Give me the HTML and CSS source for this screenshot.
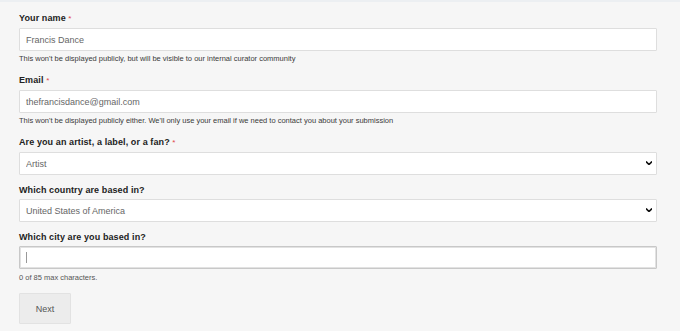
FILE: index.html
```html
<!DOCTYPE html>
<html lang="en">
<head>
<meta charset="utf-8">
<title>Submission form</title>
<link rel="stylesheet" href="styles.css">
</head>
<body>
<div class="topbar"></div>
<form class="form">
  <div class="field">
    <label class="label">Your name <span class="req">*</span></label>
    <input class="control" type="text" value="Francis Dance">
    <p class="help">This won't be displayed publicly, but will be visible to our internal curator community</p>
  </div>
  <div class="field">
    <label class="label">Email <span class="req">*</span></label>
    <input class="control" type="text" value="thefrancisdance@gmail.com">
    <p class="help">This won't be displayed publicly either. We'll only use your email if we need to contact you about your submission</p>
  </div>
  <div class="field">
    <label class="label">Are you an artist, a label, or a fan? <span class="req">*</span></label>
    <div class="select-wrap">
      <select class="control select"><option>Artist</option></select>
      <svg class="arrow" width="6" height="4" viewBox="0 0 6 4"><path d="M0 0.5 L3 3.5 L6 0.5" fill="none" stroke="#111" stroke-width="1.6"/></svg>
    </div>
  </div>
  <div class="field">
    <label class="label">Which country are based in?</label>
    <div class="select-wrap">
      <select class="control select"><option>United States of America</option></select>
      <svg class="arrow" width="6" height="4" viewBox="0 0 6 4"><path d="M0 0.5 L3 3.5 L6 0.5" fill="none" stroke="#111" stroke-width="1.6"/></svg>
    </div>
  </div>
  <div class="field field-city">
    <label class="label">Which city are you based in?</label>
    <div class="select-wrap">
      <input class="control focused" type="text" value="">
      <span class="caret"></span>
    </div>
    <p class="help count">0 of 85 max characters.</p>
  </div>
  <button class="btn" type="button">Next</button>
</form>
</body>
</html>
```
FILE: styles.css
```css
* { box-sizing: border-box; }
html, body { margin: 0; padding: 0; }
body {
  background: #f6f6f6;
  font-family: "Liberation Sans", Arial, sans-serif;
  width: 680px;
  height: 331px;
  overflow: hidden;
}
.topbar {
  height: 2px;
  background: #eceff2;
}
.form {
  padding: 10px 0 0 19px;
  width: 657px;
}
.field {
  display: flex;
  flex-direction: column;
  margin-bottom: 9px;
}
.field-city {
  margin-top: 1px;
}
.label {
  display: block;
  font-size: 9px;
  font-weight: bold;
  line-height: 12px;
  color: #222;
  margin-bottom: 3px;
  letter-spacing: 0.1px;
}
.req {
  color: #e0474c;
  font-weight: normal;
  font-size: 8px;
}
.control {
  display: block;
  width: 638px;
  height: 23px;
  margin: 0;
  padding: 0 6px;
  border: 1px solid #dedede;
  border-radius: 1px;
  background: #fff;
  font-family: "Liberation Sans", Arial, sans-serif;
  font-size: 9px;
  color: #666;
  outline: none;
}
.select {
  -webkit-appearance: none;
  appearance: none;
}
.select-wrap {
  position: relative;
  width: 638px;
  height: 23px;
}
.arrow {
  position: absolute;
  right: 5px;
  top: 9px;
}
.focused {
  border: 1px solid #c8c8c8;
  box-shadow: inset 0 0 0 1px #e2e2e2;
}
.caret {
  position: absolute;
  left: 7px;
  top: 6px;
  width: 1px;
  height: 11px;
  background: #999;
}
.help {
  margin: 3px 0 1px;
  font-size: 7.5px;
  line-height: 10px;
  color: #3a3a3a;
}
.count {
  color: #555;
  margin-top: 4px;
}
.btn {
  display: block;
  margin-top: 5px;
  width: 52px;
  height: 31px;
  padding: 0;
  background: #ececec;
  border: 1px solid #e2e2e2;
  border-radius: 1px;
  font-family: "Liberation Sans", Arial, sans-serif;
  font-size: 9px;
  color: #555;
}
```
